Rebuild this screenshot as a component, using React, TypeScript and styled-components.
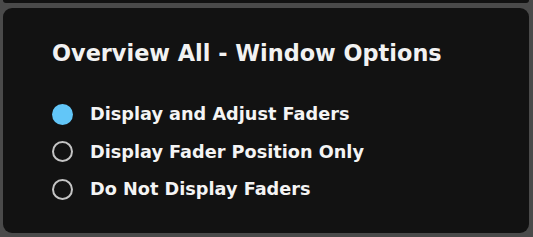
import React, { useState } from "react";
import styled, { createGlobalStyle } from "styled-components";

const Global = createGlobalStyle`
  html, body { margin: 0; padding: 0; background: #4a4a4a; }
  body { font-family: "DejaVu Sans", sans-serif; }
`;

const Page = styled.div`
  width: 533px;
  height: 237px;
  background: #4a4a4a;
  display: flex;
  flex-direction: column;
  gap: 5px;
  padding: 0 4px 4px 3px;
  box-sizing: border-box;
  overflow: hidden;
`;

const TopStrip = styled.div`
  height: 3px;
  flex: none;
  background: #121212;
  border-radius: 0 0 8px 8px;
`;

const Card = styled.section`
  flex: 1;
  background: #121212;
  border-radius: 9px;
  padding: 32px 0 0 49px;
  box-sizing: border-box;
`;

const Title = styled.h2`
  margin: 0 0 37px 0;
  color: #f2f2f2;
  font-family: "DejaVu Sans", sans-serif;
  font-weight: 700;
  font-size: 22.4px;
  line-height: 26px;
  white-space: nowrap;
`;

const List = styled.div`
  display: flex;
  flex-direction: column;
  gap: 15.5px;
`;

const Row = styled.label`
  display: flex;
  align-items: center;
  gap: 17px;
  height: 22px;
  cursor: pointer;
`;

const Dot = styled.span<{ $on: boolean }>`
  width: 21px;
  height: 21px;
  border-radius: 50%;
  box-sizing: border-box;
  flex: none;
  background: ${(p) => (p.$on ? "#62c6f8" : "transparent")};
  border: ${(p) => (p.$on ? "none" : "2px solid #c4c4c4")};
`;

const Label = styled.span`
  color: #f4f4f4;
  font-family: "DejaVu Sans", sans-serif;
  font-weight: 700;
  font-size: 17.7px;
  white-space: nowrap;
`;

const options = [
  "Display and Adjust Faders",
  "Display Fader Position Only",
  "Do Not Display Faders",
];

export default function App() {
  const [sel, setSel] = useState(0);
  return (
    <>
      <Global />
      <Page>
        <TopStrip />
        <Card>
          <Title>Overview All - Window Options</Title>
          <List>
            {options.map((o, i) => (
              <Row key={o} onClick={() => setSel(i)}>
                <Dot $on={sel === i} />
                <Label>{o}</Label>
              </Row>
            ))}
          </List>
        </Card>
      </Page>
    </>
  );
}
